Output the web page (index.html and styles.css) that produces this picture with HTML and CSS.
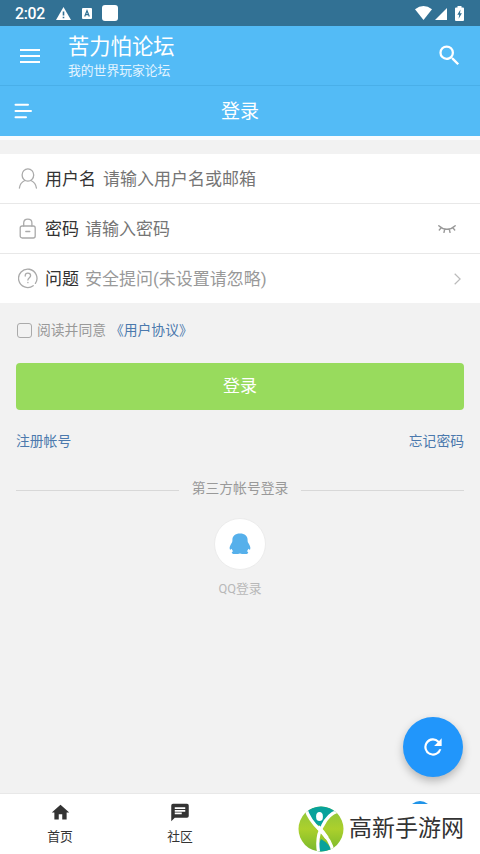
FILE: index.html
```html
<!DOCTYPE html>
<html lang="zh-CN">
<head>
<meta charset="utf-8">
<title>登录</title>
<link rel="stylesheet" href="styles.css">
</head>
<body>
<div class="screen">
  <div class="status">
    <span class="time">2:02</span>
    <svg class="s-warn" width="15" height="13" viewBox="0 0 15 13"><path fill="#fff" d="M7.500 0 15 13H0z"/><path stroke="#327194" stroke-width="1.600" d="M7.500 4.500v4M7.500 9.700v1.600"/></svg>
    <svg class="s-key" width="10" height="11" viewBox="0 0 10 11"><rect width="10" height="11" rx="1" fill="#fff"/><path d="M2.700 8.500 5 2.700l2.300 5.800M3.600 6.600h2.800" fill="none" stroke="#327194" stroke-width="1.200"/></svg>
    <span class="s-box"></span>
    <svg class="s-wifi" width="17" height="14" viewBox="0 0 17 14"><path fill="#fff" d="M0 3.200Q8.500-3 17 3.200L8.500 14z"/></svg>
    <svg class="s-cell" width="12" height="12" viewBox="0 0 12 12"><path fill="#fff" d="M12 0v12H0z"/></svg>
    <svg class="s-batt" width="9" height="15" viewBox="0 0 9 15"><path fill="#fff" d="M2.500 0h4v1.500H8q1 0 1 1V14q0 1-1 1H1q-1 0-1-1V2.500q0-1 1-1h1.500z"/><path fill="#327194" d="M5.500 3.500 2.300 8.700h1.900L3.600 12.700 6.900 7.200H5z"/></svg>
  </div>
  <header class="appbar">
    <svg class="menu" width="20" height="14" viewBox="0 0 20 14"><path stroke="#fff" stroke-width="2" d="M0 1h20M0 7h20M0 13h20"/></svg>
    <div class="titles"><div class="title">苦力怕论坛</div><div class="subtitle">我的世界玩家论坛</div></div>
    <svg class="search" width="27" height="27" viewBox="0 0 24 24"><path fill="#fff" d="M15.500 14h-.79l-.28-.27A6.470 6.470 0 0 0 16 9.500 6.500 6.500 0 1 0 9.500 16c1.610 0 3.090-.59 4.230-1.570l.27.28v.79l5 4.990L20.490 19zm-6 0a4.500 4.500 0 1 1 0-9 4.500 4.500 0 0 1 0 9z"/></svg>
  </header>
  <div class="pagebar">
    <svg width="18" height="16" viewBox="0 0 18 16"><path stroke="#fff" stroke-width="2" stroke-linecap="round" d="M1.500 1.700h12.500M1.500 8h15.500M1.500 14.300h10.500"/></svg>
    <h1>登录</h1>
  </div>
  <main>
    <div class="form">
      <div class="row">
        <svg width="20" height="21" viewBox="0 0 20 21" fill="none" stroke="#aaa" stroke-width="1.300" stroke-linecap="round"><ellipse cx="9.900" cy="7" rx="5.800" ry="6.200"/><path d="M6.800 12.500Q2 14.800 1.400 20M13 12.500q4.800 2.300 5.400 7.500"/></svg>
        <span class="label">用户名</span><span class="hint">请输入用户名或邮箱</span>
      </div>
      <div class="row">
        <svg width="20" height="21" viewBox="0 0 20 21" fill="none" stroke="#aaa" stroke-width="1.300" stroke-linecap="round"><rect x="2.200" y="8" width="15" height="12" rx="2"/><path d="M5.700 8V5q0-3.800 4.100-3.800T13.900 5v3M7.800 13.500h4"/></svg>
        <span class="label">密码</span><span class="hint">请输入密码</span>
        <svg class="eye" width="18" height="10" viewBox="0 0 18 10" fill="none" stroke="#999" stroke-width="1.400" stroke-linecap="round"><path d="M.8 1.700Q9 9 17.200 1.700M3.300 3.600 1.300 6M6.700 5.200 6 8.300M11.300 5.200l.7 3.100M14.700 3.600l2 2.400"/></svg>
      </div>
      <div class="row">
        <svg width="20" height="21" viewBox="0 0 20 21" fill="none" stroke="#aaa" stroke-width="1.300" stroke-linecap="round"><path d="M15.200 17.700a9.200 9.200 0 1 1 2.200-2.300M7.200 8q0-2.800 2.700-2.800t2.700 2.600c0 1.800-2.700 2-2.700 4.200M9.900 14.300v.4"/></svg>
        <span class="label">问题</span><span class="hint light">安全提问(未设置请忽略)</span>
        <svg class="arrow" width="7" height="12" viewBox="0 0 7 12"><path d="m.7.7 5.400 5.300-5.400 5.300" fill="none" stroke="#bbb" stroke-width="1.200"/></svg>
      </div>
    </div>
    <div class="agree"><span class="check"></span><span>阅读并同意</span><a>《用户协议》</a></div>
    <div class="submit">登录</div>
    <div class="links"><a>注册帐号</a><a>忘记密码</a></div>
    <div class="divider"><span>第三方帐号登录</span></div>
    <div class="qq">
      <div class="disc"><svg width="22" height="22" viewBox="0 0 22 22"><path fill="#56b0eb" d="M11 .5c4.800 0 7.600 2.600 7.600 6.500 0 1.300.1 2 .6 2.800 1.500 2.300 2.700 4.700 2 6.400-.5.900-1.300.2-1.900-.4-.3 1-.8 1.900-1.500 2.500 1 .4 1.600.9 1.300 1.600-.6 1.400-5.200 1.500-8.100.6-2.900.9-7.500.8-8.100-.6-.3-.7.300-1.200 1.300-1.600-.7-.6-1.200-1.500-1.500-2.500-.6.600-1.400 1.300-1.900.4-.7-1.700.5-4.100 2-6.400.5-.8.600-1.500.6-2.800C3.400 3.100 6.200.5 11 .5z"/></svg></div>
      <span>QQ登录</span>
    </div>
  </main>
  <nav class="tabs">
    <div class="tab"><svg width="21" height="21" viewBox="0 0 24 24"><path fill="#333" d="M10 20v-6h4v6h5v-8h3L12 3 2 12h3v8z"/></svg><span>首页</span></div>
    <div class="tab"><svg width="22" height="21" viewBox="0 0 24 24"><path fill="#333" d="M20 2H4a2 2 0 0 0-2 2v18l4-4h14a2 2 0 0 0 2-2V4a2 2 0 0 0-2-2zM6 9h12v2H6zm8 5H6v-2h8zm4-6H6V6h12z"/></svg><span>社区</span></div>
  </nav>
  <div class="fab"><svg width="26" height="26" viewBox="0 0 24 24"><path fill="#fff" d="M17.650 6.350A8 8 0 1 0 19.730 14h-2.080A6 6 0 1 1 12 6c1.660 0 3.140.69 4.220 1.780L13 11h7V4z"/></svg></div>
  <svg class="peek" width="16" height="3" viewBox="0 0 16 3"><path fill="#2094e8" d="M0 3Q8-3 16 3z"/></svg>
  <div class="brand">
    <svg width="46" height="46" viewBox="0 0 46 46">
      <defs><linearGradient id="lime" x1="0" y1="0" x2="0" y2="1"><stop offset="0" stop-color="#8ac43f"/><stop offset=".5" stop-color="#acd02c"/><stop offset="1" stop-color="#77b82c"/></linearGradient><clipPath id="round"><circle cx="23" cy="23" r="22.500"/></clipPath></defs>
      <g clip-path="url(#round)"><rect width="46" height="46" fill="url(#lime)"/>
      <path fill="#08a29b" d="M8 0h32v5Q30 9 23.500 21 13 17 8 3z"/>
      <path fill="#08a29b" d="M23 33q9 5 11.500 14H20.500q-1-8 2.500-14z"/>
      <path fill="none" stroke="#fff" stroke-width="3.200" d="M7.500 2Q11 14 22 24T35 46M40 5Q30 8 24.500 20 18 30 20.500 46"/><path fill="none" stroke="#fff" stroke-width="4" d="M20 21q5 5 9 11"/></g>
      <ellipse cx="21.500" cy="10.500" rx="3.400" ry="4.600" fill="#fff"/>
    </svg>
    <span>高新手游网</span>
  </div>
</div>
</body>
</html>
```
FILE: styles.css
```css
* { box-sizing: border-box; }
body { margin: 0; font-family: Roboto, "Noto Sans CJK SC", sans-serif; }
svg { display: block; flex: none; }
.screen { position: relative; width: 480px; height: 854px; overflow: hidden; background: #f2f2f2; display: flex; flex-direction: column; }
.status { height: 26px; flex: none; background: #327194; display: flex; align-items: center; padding: 0 16px 0 15px; color: #fff; }
.time { font-size: 15.8px; font-weight: 500; width: 41px; letter-spacing: -.3px; line-height: 26px; padding-top: 1px; }
.s-key { margin-left: 11px; }
.s-box { width: 16px; height: 16px; border-radius: 3px; background: #fff; margin-left: 10px; }
.s-wifi { margin-left: auto; }
.s-cell { margin: 2px 8px 0 3px; }
.appbar { height: 60px; flex: none; background: #53bbf6; border-bottom: 1px solid #49afe9; display: flex; align-items: center; color: #fff; padding: 0 17px 0 20px; }
.titles { margin-left: 28px; padding-top: 2px; flex: 1; }
.title { font-size: 21.3px; line-height: 28px; }
.subtitle { font-size: 12.8px; line-height: 20px; color: #e3f4ff; }
.pagebar { height: 50px; flex: none; background: #53bbf6; color: #fff; display: grid; grid-template-columns: 18px 1fr 18px; align-items: center; padding: 0 14px; }
.pagebar h1 { margin: 0; padding-top: 1px; font-size: 19px; line-height: 28px; font-weight: 400; text-align: center; }
main { flex: 1; display: flex; flex-direction: column; border-top: 4px solid #f8fbfe; }
.form { margin-top: 14px; background: #fff; }
.row { height: 50px; display: flex; align-items: center; padding: 0 18px; border-bottom: 1px solid #e8e8e8; font-size: 17px; line-height: 24px; }
.row:last-child { height: 49px; border-bottom: 0; }
.label { margin-left: 7px; color: #333; }
.hint { margin-left: 7px; color: #757575; }
.light { color: #999; }
.row:nth-child(n+2) .hint { margin-left: 6px; }
.eye { margin-left: auto; margin-right: 6px; }
.arrow { margin-left: auto; margin-right: 1px; }
.agree { display: flex; align-items: center; height: 24px; margin: 15px 16px 0; font-size: 13.8px; line-height: 24px; color: #999; }
.check { width: 15px; height: 15px; border: 1px solid #aaa; border-radius: 3px; margin: 1px 5px 0 1px; }
a { color: #4b79ad; }
.agree a { margin-left: 4px; }
.submit { height: 47px; margin: 21px 16px 0; border-radius: 4px; background: #98db5d; color: #fff; font-size: 17px; line-height: 46px; text-align: center; }
.links { display: flex; justify-content: space-between; margin: 20px 16px 0; font-size: 13.8px; line-height: 22px; }
.divider { display: flex; align-items: center; gap: 13px; margin: 26px 16px 0; height: 22px; font-size: 13.8px; line-height: 22px; color: #999; }
.divider span { padding-bottom: 2px; }
.divider::before, .divider::after { content: ""; flex: 1; height: 1px; background: #d8d8d8; margin-top: 3px; }
.qq { display: flex; flex-direction: column; align-items: center; margin-top: 18px; font-size: 12.8px; line-height: 20px; color: #b8b8b8; }
.disc { width: 52px; height: 52px; border-radius: 50%; border: 1px solid #ececec; background: #fff; display: flex; align-items: center; justify-content: center; margin-bottom: 9px; }
.tabs { height: 61px; flex: none; display: grid; grid-template-columns: repeat(4, 1fr); background: #fff; border-top: 1px solid #e8e8e8; }
.tab { display: flex; flex-direction: column; align-items: center; padding-top: 8px; font-size: 12.8px; line-height: 20px; color: #333; }
.tab span { margin-top: 4px; }
.fab { position: absolute; left: 403px; top: 717px; width: 60px; height: 60px; border-radius: 50%; background: #2196fb; display: flex; align-items: center; justify-content: center; box-shadow: 0 4px 8px rgba(0,0,0,.25); }
.peek { position: absolute; left: 412px; top: 801px; }
.brand { position: absolute; left: 298px; top: 806px; display: flex; align-items: center; gap: 5px; font-size: 23px; line-height: 30px; color: #333; }
```
